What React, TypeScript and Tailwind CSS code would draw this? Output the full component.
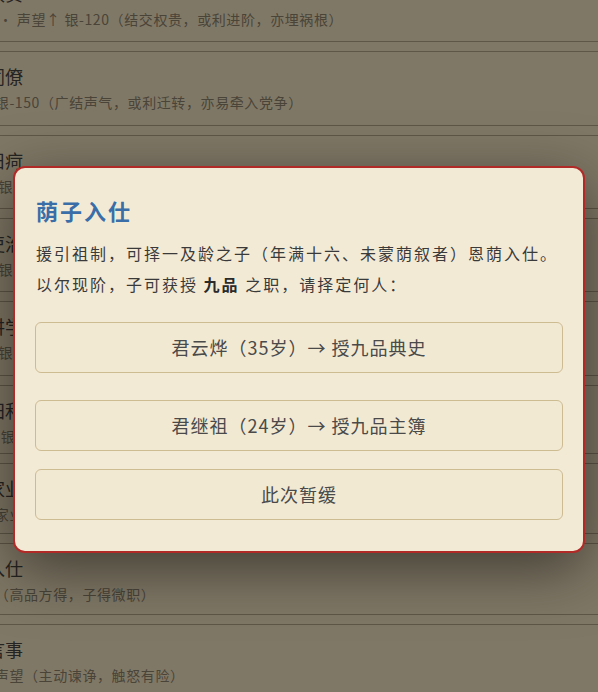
import React from "react";

const rows = [
  { t: "结交权贵", s: "人脉增 · 声望↑ 银-120（结交权贵，或利进阶，亦埋祸根）", h: "h-[74px]" },
  { t: "结交同僚", s: "人脉↑银-150（广结声气，或利迁转，亦易牵入党争）", h: "h-[75px]" },
  { t: "调养旧疴", s: "体魄↑ 银-80（延医问药，静养数旬）", h: "h-[74px]" },
  { t: "整饬吏治", s: "政绩↑ 银-60（清查积弊，或招怨谤）", h: "h-[74px]" },
  { t: "延师讲学", s: "学识↑ 银-100（聘请名儒，教授子弟）", h: "h-[75px]" },
  { t: "置办田和", s: "年入+1 银-300（广置田产，以备不时）", h: "h-[69px]" },
  { t: "经营家业", s: "（大兴家业，或有亏折）", h: "h-[71px]" },
  { t: "荫子入仕", s: "需荫资（高品方得，子得微职）", h: "h-[72px]" },
  { t: "上疏言事", s: "或可增声望（主动谏诤，触怒有险）", h: "h-[74px]" },
];

export default function App() {
  const font = { fontFamily: '"Noto Sans CJK SC", "Noto Sans", sans-serif' };
  return (
    <div className="relative w-[598px] h-[692px] overflow-hidden bg-[#f6e7c4]" style={font}>
      <div className="-mt-[32px] -ml-[49px] w-[647px] flex flex-col gap-[9px]">
        {rows.map((r, i) => (
          <div key={i} className={`${r.h} shrink-0 border-y border-[#b5a587] pt-[11px]`}>
            <div className="text-[18px] leading-[26px] text-[#4a4642] whitespace-nowrap">{r.t}</div>
            <div className="mt-[3px] text-[14px] leading-[20px] tracking-[0.6px] text-[#8e836c] whitespace-nowrap">{r.s}</div>
          </div>
        ))}
      </div>

      <div className="absolute inset-0 bg-black/[0.48] flex items-start justify-center pt-[166px] px-[13px]">
        <div className="w-full rounded-[12px] border-2 border-[#b22a28] bg-[#f3ead6] px-[20px] pt-[26px] pb-[31px] shadow-[0_16px_60px_rgba(0,0,0,0.5)]">
          <div className="text-[22px] leading-[32px] font-bold tracking-[2px] text-[#3a6ea8] pl-[1px]">荫子入仕</div>
          <p className="mt-[12px] text-[16px] leading-[31px] tracking-[2px] text-[#3a3a3a] pl-[1px] whitespace-nowrap">
            援引祖制，可择一及龄之子（年满十六、未蒙荫叙者）恩荫入仕。
            <br />
            以尔现阶，子可获授 <b className="font-bold text-[#2a2a2a]">九品</b> 之职，请择定何人：
          </p>
          <button className="mt-[22px] w-full h-[51px] rounded-[6px] border border-[#cdbb92] bg-[#f2e9d3] text-[18px] tracking-[1px] text-[#4a4a4a] flex items-center justify-center">
            君云烨（35岁）→ 授九品典史
          </button>
          <button className="mt-[27px] w-full h-[51px] rounded-[6px] border border-[#cdbb92] bg-[#f2e9d3] text-[18px] tracking-[1px] text-[#4a4a4a] flex items-center justify-center">
            君继祖（24岁）→ 授九品主簿
          </button>
          <button className="mt-[18px] w-full h-[51px] rounded-[6px] border border-[#cdbb92] bg-[#f2e9d3] text-[18px] tracking-[1px] text-[#4a4a4a] flex items-center justify-center">
            此次暂缓
          </button>
        </div>
      </div>
    </div>
  );
}
